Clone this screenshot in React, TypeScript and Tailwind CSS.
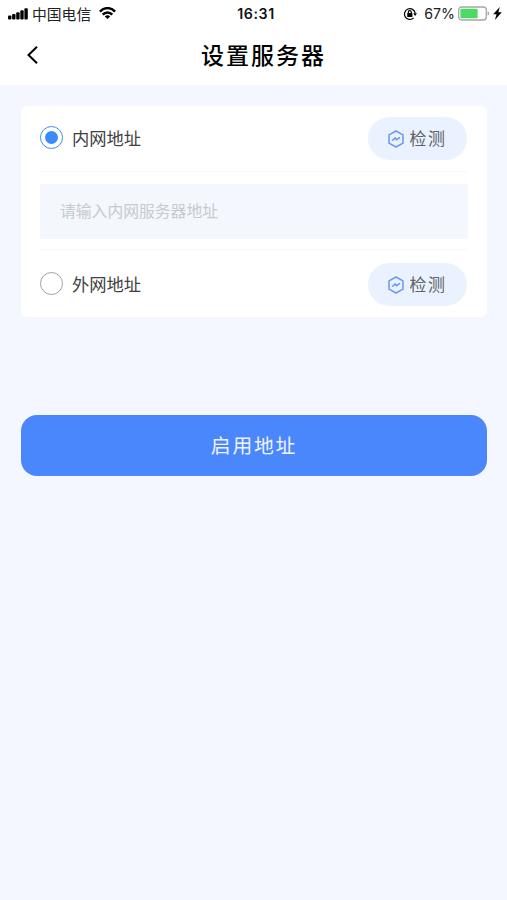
import { useState } from 'react';

type AddressType = 'inner' | 'outer';

function StatusBar() {
  return (
    <div className="flex h-7 items-center justify-between pl-2 pr-[5px] text-black">
      <div className="flex w-40 items-center">
        <svg className="mb-px h-3 w-5 shrink-0" viewBox="0 0 20 12" fill="currentColor">
          <rect x="0" y="7.5" width="3.4" height="3.9" rx="1" />
          <rect x="4.1" y="6" width="3.4" height="5.4" rx="1" />
          <rect x="8.2" y="4.3" width="3.4" height="7.1" rx="1" />
          <rect x="12.3" y="2.3" width="3.4" height="9.1" rx="1" />
          <rect x="16.4" y="0.3" width="3.4" height="11.1" rx="1" />
        </svg>
        <span className="ml-1 pt-px text-[14.8px] leading-7 text-[#222]">中国电信</span>
        <svg className="mb-0.5 ml-2 h-3 w-[17px] shrink-0" viewBox="0 0 17 12" fill="none" stroke="currentColor" strokeWidth="2.4">
          <path d="M0.9 4.6C5.1-0.1 11.9-0.1 16.1 4.6" />
          <path d="M3.7 7.6C6.4 4.7 10.6 4.7 13.3 7.6" />
          <path d="M8.5 12L5.8 9.4C7.3 8 9.7 8 11.2 9.4Z" fill="currentColor" stroke="none" />
        </svg>
      </div>
      <span className="pl-0.5 font-['Inter',sans-serif] text-[14.2px] font-semibold leading-7 tracking-[0.6px] text-[#111]">16:31</span>
      <div className="flex w-40 items-center justify-end">
        <svg className="mb-px h-3.5 w-3.5 shrink-0" viewBox="0 0 14 14" fill="none" stroke="currentColor" strokeWidth="1.2">
          <path d="M10.7 10.9A5.4 5.4 0 1 1 12.2 6.2" />
          <path d="M10.2 6.2H14L12.1 8.9Z" fill="currentColor" stroke="none" />
          <rect x="4.2" y="6.1" width="5.2" height="3.9" rx="0.6" fill="currentColor" stroke="none" />
          <path d="M5.3 6.4V5.2a1.5 1.5 0 0 1 3 0V6.4" />
        </svg>
        <span className="ml-[7px] font-['Inter',sans-serif] text-[14.2px] leading-7 text-[#222]">67%</span>
        <svg className="mb-0.5 ml-[3px] h-[15px] w-8 shrink-0" viewBox="0 0 32 15" fill="none">
          <rect x="0.7" y="1" width="27.6" height="13" rx="3" stroke="#a6a6a6" strokeWidth="1.3" />
          <rect x="2.4" y="2.8" width="17.2" height="9.4" rx="1" fill="#4cd964" />
          <path d="M29.6 5.2Q31.2 5.6 31.2 7.4T29.6 9.6Z" fill="#a6a6a6" />
        </svg>
        <svg className="mb-0.5 ml-[3px] h-[13px] w-[9px] shrink-0" viewBox="0 0 8 12" fill="currentColor">
          <path d="M6.1 0L0 6.8H3.1L1.6 12L8 4.8H4.8Z" />
        </svg>
      </div>
    </div>
  );
}

function CheckButton() {
  return (
    <button className="mr-px flex h-[43px] w-[99px] items-center rounded-full bg-[#ebf2ff] pl-5 text-[#606266]">
      <svg className="h-[18px] w-4 shrink-0" viewBox="0 0 16 18" fill="none" stroke="#6797f5" strokeWidth="1.5" strokeLinejoin="round">
        <path d="M8 1L15 4.8V13.2L8 17L1 13.2V4.8Z" />
        <path d="M4.6 10.2L7.3 7.9L8.5 9.8L11.4 7.6" strokeLinecap="round" />
      </svg>
      <span className="ml-[5.5px] pt-0.5 text-[17px] leading-none tracking-[1.5px]">检测</span>
    </button>
  );
}

interface AddressRowProps {
  label: string;
  checked: boolean;
  onSelect: () => void;
}

function AddressRow({ label, checked, onSelect }: AddressRowProps) {
  return (
    <div className="flex h-[65px] items-center justify-between">
      <button onClick={onSelect} className="flex items-center">
        <span
          className={`mb-[3px] flex size-[23px] items-center justify-center rounded-full border-[1.5px] ${
            checked ? 'border-[#3b8cf7]' : 'border-[#a0a0a0]'
          }`}
        >
          {checked && <span className="size-[13px] rounded-full bg-[#3b8cf7]" />}
        </span>
        <span className="ml-[9px] text-[17.3px] leading-6 text-[#404143]">{label}</span>
      </button>
      <CheckButton />
    </div>
  );
}

export default function App() {
  const [selected, setSelected] = useState<AddressType>('inner');
  const [address, setAddress] = useState('');

  return (
    <div className="min-h-screen bg-[#f4f7ff] font-['Liberation_Sans','Noto_Sans_CJK_SC',sans-serif]">
      <header className="h-[86px] border-b border-[#f6f8fc] bg-white">
        <StatusBar />
        <div className="grid h-[54px] grid-cols-[66px_1fr_48px] items-center">
          <button className="pl-[26px]">
            <svg className="h-5 w-3" viewBox="0 0 12 20" fill="none" stroke="#000" strokeWidth="2">
              <path d="M11 1.7L2.5 10L11 18.3" />
            </svg>
          </button>
          <h1 className="pl-0.5 pt-0.5 text-center text-[23px] font-medium leading-8 tracking-[2px] text-black">设置服务器</h1>
        </div>
      </header>

      <main className="px-[21px] pt-5">
        <div className="h-[211px] w-[466px] rounded-md bg-white px-[19px]">
          <AddressRow label="内网地址" checked={selected === 'inner'} onSelect={() => setSelected('inner')} />
          {/* Address input */}
          <div className="border-y border-[#f7f8fa] pb-2.5 pt-3">
            <input
              value={address}
              onChange={(e) => setAddress(e.target.value)}
              placeholder="请输入内网服务器地址"
              className="block h-[55px] w-full bg-[#f4f7fd] px-5 text-[15.8px] text-[#303133] outline-none placeholder:text-[#c8cacd]"
            />
          </div>
          <div className="pt-0.5">
            <AddressRow label="外网地址" checked={selected === 'outer'} onSelect={() => setSelected('outer')} />
          </div>
        </div>

        <button className="mt-[98px] block h-[61px] w-[466px] rounded-2xl bg-[#4a86fc] pt-0.5 text-[19.8px] tracking-[1.8px] text-[#edf3ff]">
          启用地址
        </button>
      </main>
    </div>
  );
}
